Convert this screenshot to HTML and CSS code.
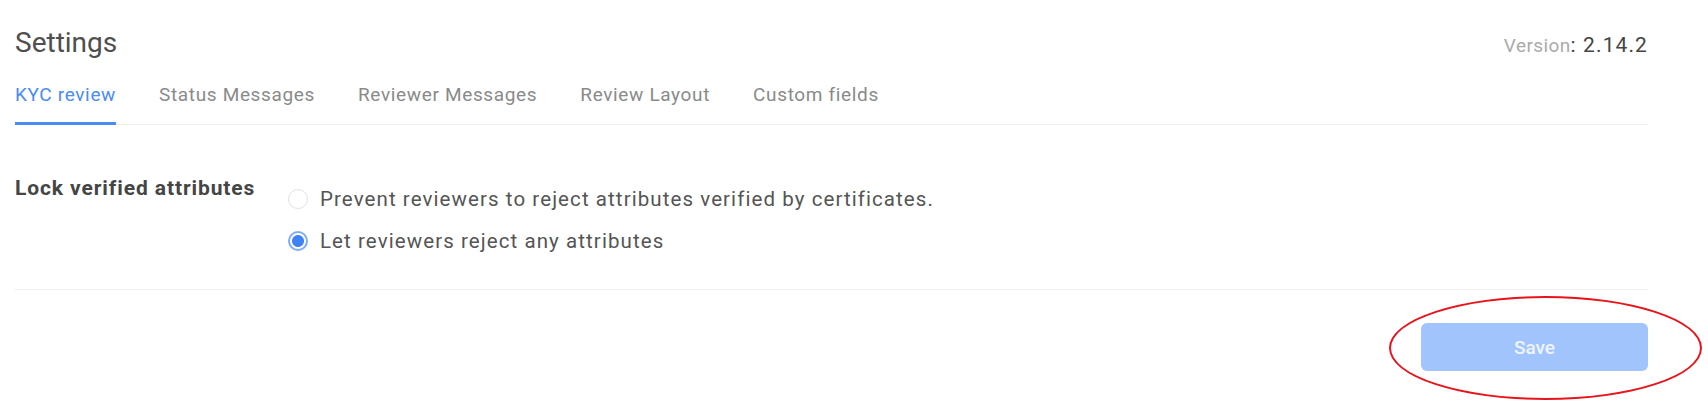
FILE: index.html
```html
<!DOCTYPE html>
<html lang="en">
<head>
    <meta charset="UTF-8">
    <meta name="viewport" content="width=device-width, initial-scale=1.0">
    <title>Settings</title>
    <link rel="stylesheet" href="styles.css">
</head>
<body>
    <div class="header">
        <h1>Settings</h1>
        <div class="version"><span class="version-label">Version</span>: 2.14.2</div>
    </div>

    <div class="tabs">
        <div class="tab active">KYC review</div>
        <div class="tab">Status Messages</div>
        <div class="tab">Reviewer Messages</div>
        <div class="tab">Review Layout</div>
        <div class="tab">Custom fields</div>
    </div>

    <div class="section">
        <div class="section-label">Lock verified attributes</div>
        <div class="radios">
            <label class="radio">
                <span class="radio-circle"></span>
                Prevent reviewers to reject attributes verified by certificates.
            </label>
            <label class="radio checked">
                <span class="radio-circle"></span>
                Let reviewers reject any attributes
            </label>
        </div>
    </div>

    <div class="footer">
        <div class="save-wrap">
            <!-- anotação vermelha em volta do botão -->
            <span class="highlight"></span>
            <button class="save" disabled>Save</button>
        </div>
    </div>
</body>
</html>
```

FILE: styles.css
```css
body {
    margin: 0;
    padding: 0 60px 0 15px;
    font-family: 'Roboto', sans-serif;
    color: #555;
    background-color: white;
}
.header {
    display: flex;
    justify-content: space-between;
    align-items: baseline;
    padding-top: 26px;
}
h1 {
    margin: 0;
    font-size: 28px;
    font-weight: 400;
    line-height: 34px;
    color: #4f4f4f;
}
.version {
    font-size: 21px;
    color: #454545;
    letter-spacing: 1.1px;
}
.version-label {
    font-size: 19px;
    color: #ababab;
    letter-spacing: 0.4px;
}
.tabs {
    display: flex;
    gap: 43px;
    margin-top: 24px;
    border-bottom: 1px solid #eeeeee;
}
.tab {
    font-size: 19px;
    line-height: 22px;
    letter-spacing: 0.65px;
    color: #8a8a8a;
    padding-bottom: 16px;
    border-bottom: 3px solid transparent;
    margin-bottom: -1px;
}
.tab.active {
    color: #4b8bf5;
    border-bottom-color: #4b8bf5;
}
.section {
    display: flex;
    align-items: flex-start;
    padding: 51px 0 34px;
    border-bottom: 1px solid #eeeeee;
}
.section-label {
    width: 273px;
    flex-shrink: 0;
    font-size: 21px;
    font-weight: 700;
    line-height: 24px;
    letter-spacing: 0.9px;
    color: #454545;
}
.radios {
    display: flex;
    flex-direction: column;
    gap: 14px;
    margin-top: 9px;
}
.radio {
    display: flex;
    align-items: center;
    gap: 12px;
    font-size: 20.5px;
    line-height: 28px;
    letter-spacing: 1.08px;
    color: #555;
}
.radio-circle {
    width: 20px;
    height: 20px;
    box-sizing: border-box;
    border: 1px solid #e2e2e2;
    border-radius: 50%;
    background-color: white;
    flex-shrink: 0;
}
.radio.checked .radio-circle {
    border: 2px solid #7fabf8;
    background: radial-gradient(circle, #3f82f5 0 5.5px, white 6.5px);
}
.footer {
    display: flex;
    justify-content: flex-end;
    padding: 33px 0 34px;
}
.save-wrap {
    position: relative;
}
.save {
    display: block;
    width: 227px;
    height: 48px;
    border: none;
    border-radius: 6px;
    background-color: #a2c4fd;
    color: #eef4ff;
    font-family: 'Roboto', sans-serif;
    font-size: 19px;
    font-weight: 500;
}
.highlight {
    position: absolute;
    left: -32px;
    top: -27px;
    width: 313px;
    height: 104px;
    box-sizing: border-box;
    border: 2px solid #e8141c;
    border-radius: 50%;
}
```
